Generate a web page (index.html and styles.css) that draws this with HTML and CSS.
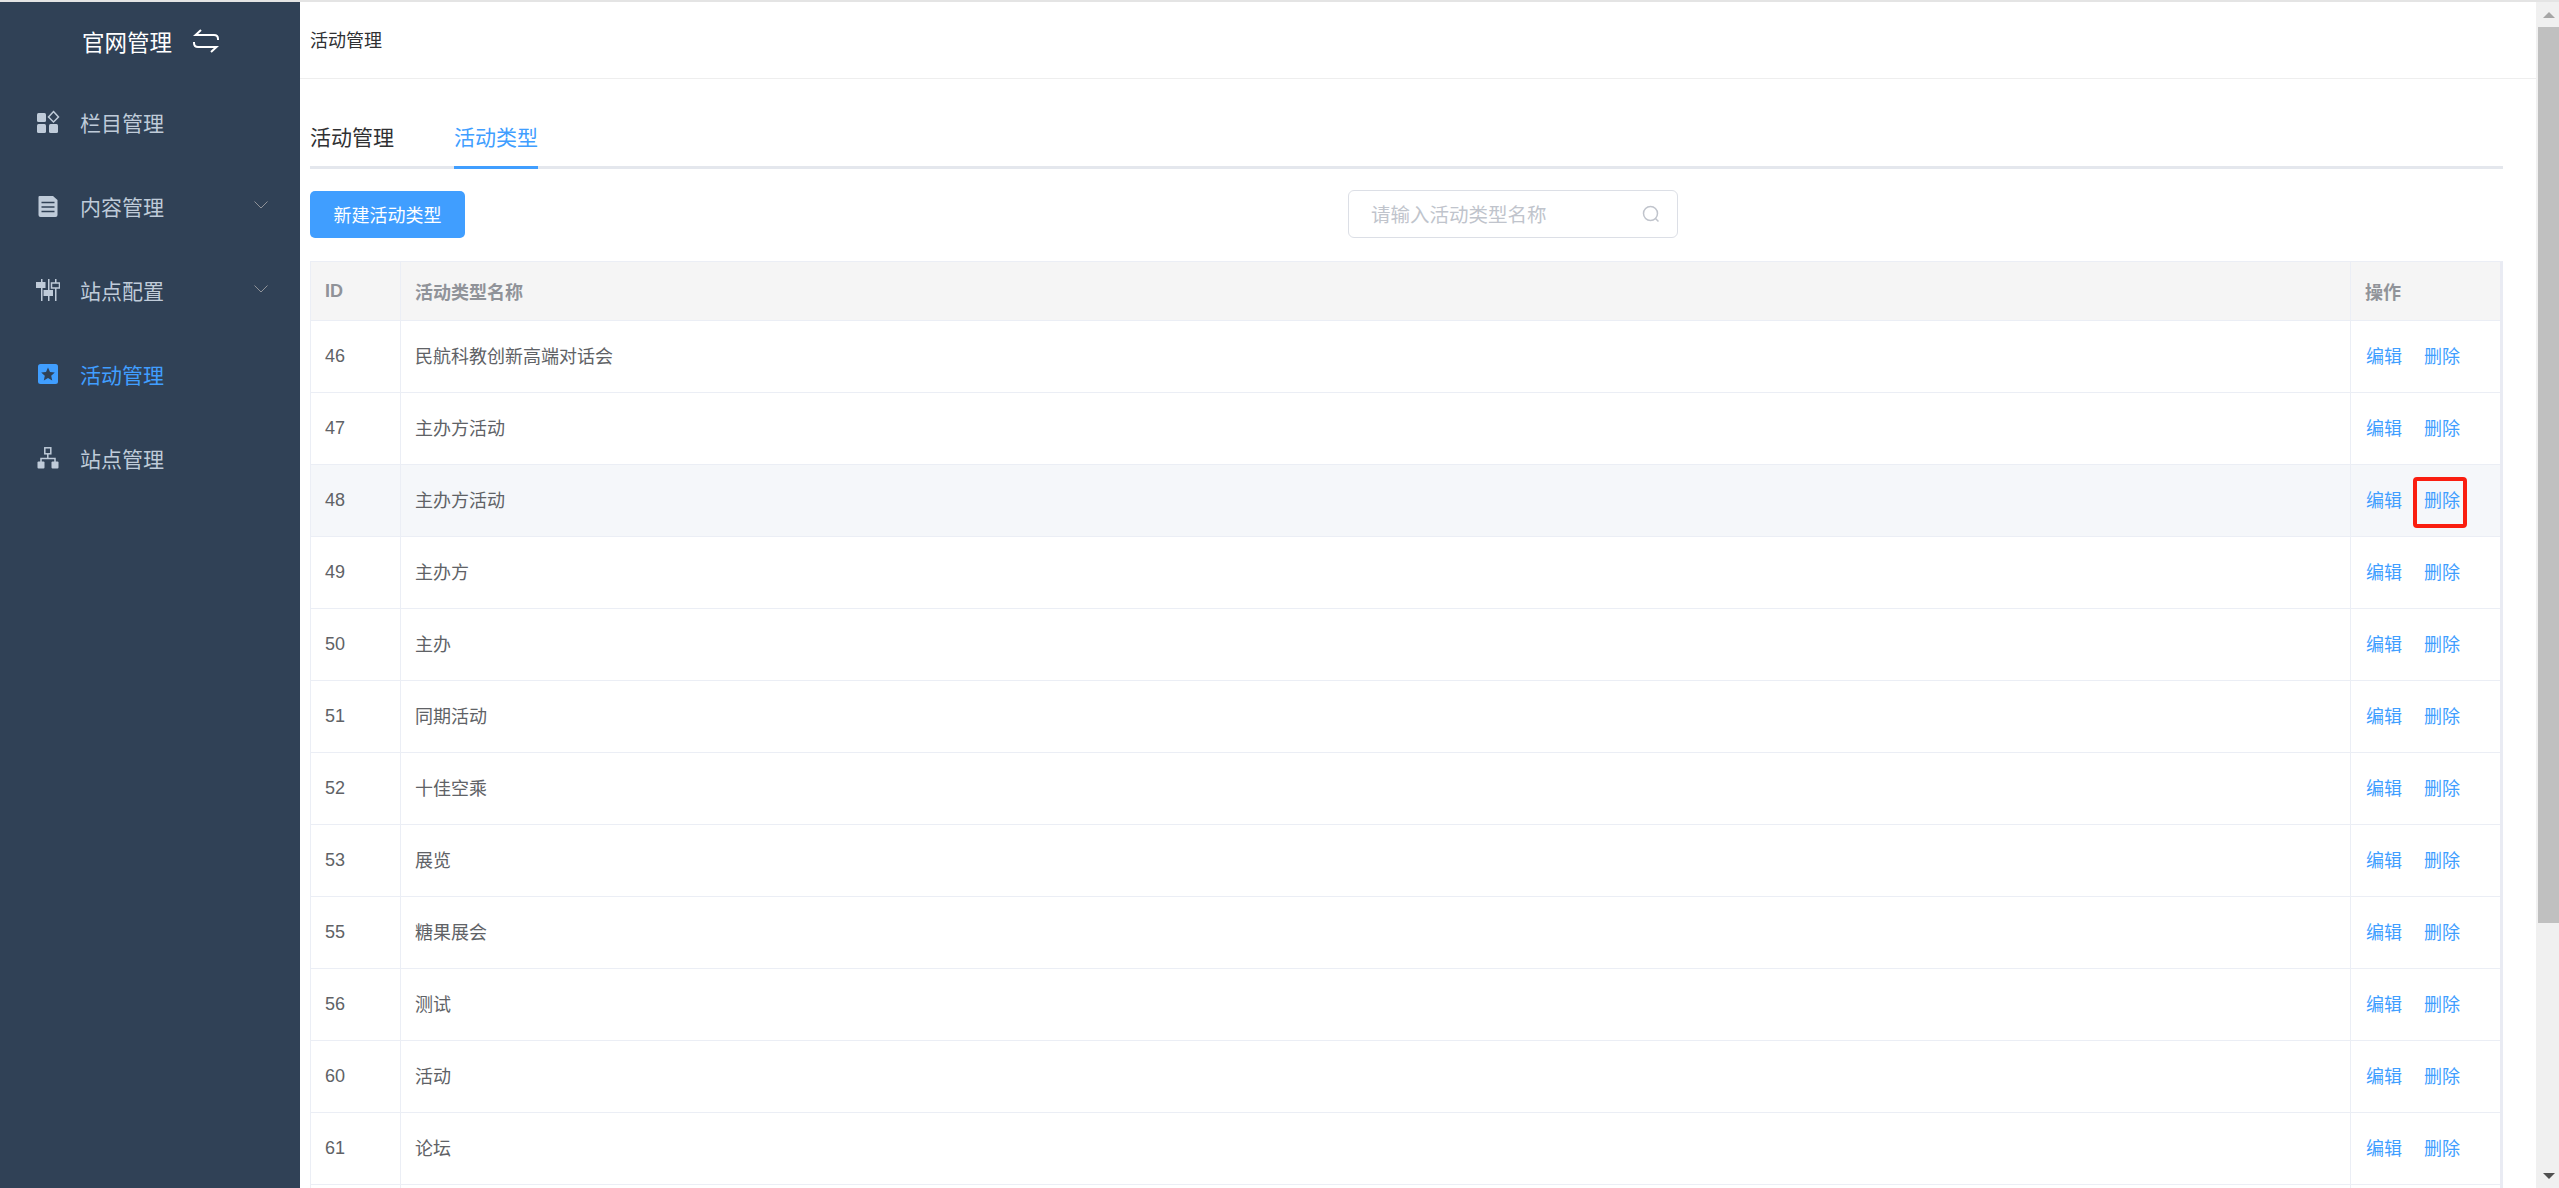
FILE: index.html
```html
<!DOCTYPE html>
<html lang="zh-CN">
<head>
    <meta charset="UTF-8">
    <title>活动类型</title>
    <link rel="stylesheet" href="styles.css">
</head>
<body>
    <div class="top-band"></div>
    <div class="app">
        <div class="sidebar">
            <div class="logo">
                <span class="logo-text">官网管理</span>
                <svg class="logo-icon" width="26" height="24" viewBox="0 0 26 24"><path d="M8 1 2.500 6 H21 Q25 6 25 10 V11 M18 23 23.500 18 H5 Q1 18 1 14 V13" fill="none" stroke="#fff" stroke-width="2"/></svg>
            </div>
            <div class="menu-item">
                <svg class="menu-icon" width="24" height="24" viewBox="0 0 24 24" fill="#bfcbd9"><rect x="1" y="3" width="9" height="9" rx="1.500"/><rect x="1" y="14" width="9" height="9" rx="1.500"/><rect x="13" y="14" width="9" height="9" rx="1.500"/><path d="M17.500 1.500 22.500 7 17.500 12 12.500 7Z" fill="none" stroke="#bfcbd9" stroke-width="1.500"/></svg>
                <span>栏目管理</span>
            </div>
            <div class="menu-item">
                <svg class="menu-icon" width="24" height="24" viewBox="0 0 24 24"><path d="M3.500 2 H17 L21.500 6 V21 Q21.500 23 19.500 23 H4.500 Q2.500 23 2.500 21 V3 Q2.500 2 3.500 2Z" fill="#bfcbd9"/><path d="M5.500 8.500 H18.500 M5.500 13 H18.500 M5.500 17.500 H18.500" stroke="#304156" stroke-width="1.500"/></svg>
                <span>内容管理</span>
                <svg class="arrow" width="14" height="8" viewBox="0 0 14 8"><path d="M.500.500 7 7 13.500.500" fill="none" stroke="#909399" stroke-width="1"/></svg>
            </div>
            <div class="menu-item">
                <svg class="menu-icon" width="24" height="24" viewBox="0 0 24 24" fill="#bfcbd9"><path d="M5 1h1.500v22H5zM12 1h1.500v22H12zM19 1h1.500v22H19z"/><rect x="0" y="4" width="9.500" height="6"/><rect x="7.500" y="12" width="9.500" height="6"/><rect x="15.500" y="5" width="8" height="5" fill="#304156" stroke="#bfcbd9" stroke-width="1.500"/></svg>
                <span>站点配置</span>
                <svg class="arrow" width="14" height="8" viewBox="0 0 14 8"><path d="M.500.500 7 7 13.500.500" fill="none" stroke="#909399" stroke-width="1"/></svg>
            </div>
            <div class="menu-item active">
                <svg class="menu-icon" width="24" height="24" viewBox="0 0 24 24"><rect x="2" y="2" width="20" height="20" rx="2.500" fill="#409eff"/><path d="M12 5.500 14 10 18.800 10.500 15.200 13.700 16.200 18.500 12 16 7.800 18.500 8.800 13.700 5.200 10.500 10 10Z" fill="#304156"/></svg>
                <span>活动管理</span>
            </div>
            <div class="menu-item">
                <svg class="menu-icon" width="24" height="24" viewBox="0 0 24 24"><rect x="8.800" y="1.800" width="6" height="6" fill="none" stroke="#bfcbd9" stroke-width="1.500"/><path d="M11.800 8V12.500M5 16V12.500H19V16" fill="none" stroke="#bfcbd9" stroke-width="1.500"/><rect x="1.500" y="15.500" width="7" height="7" rx="1" fill="#bfcbd9"/><rect x="15.500" y="15.500" width="7" height="7" rx="1" fill="#bfcbd9"/></svg>
                <span>站点管理</span>
            </div>
        </div>

        <div class="main">
            <div class="page-header">活动管理</div>
            <div class="content">
                <div class="tabs">
                    <div class="tab">活动管理</div>
                    <div class="tab active">活动类型</div>
                </div>
                <div class="toolbar">
                    <button class="btn">新建活动类型</button>
                    <div class="search">
                        <span class="placeholder">请输入活动类型名称</span>
                        <svg width="18" height="18" viewBox="0 0 18 18"><circle cx="8.500" cy="8.500" r="7" fill="none" stroke="#c0c4cc" stroke-width="1.500"/><path d="M13.500 13.500 16.500 16.500" stroke="#c0c4cc" stroke-width="1.500"/></svg>
                    </div>
                </div>
                <table class="data-table">
                    <thead>
                        <tr><th class="col-id">ID</th><th>活动类型名称</th><th class="col-op">操作</th></tr>
                    </thead>
                    <tbody>
                        <tr><td>46</td><td>民航科教创新高端对话会</td><td><a class="link">编辑</a><a class="link">删除</a></td></tr>
                        <tr><td>47</td><td>主办方活动</td><td><a class="link">编辑</a><a class="link">删除</a></td></tr>
                        <tr class="hover"><td>48</td><td>主办方活动</td><td><a class="link">编辑</a><a class="link marked">删除</a></td></tr>
                        <tr><td>49</td><td>主办方</td><td><a class="link">编辑</a><a class="link">删除</a></td></tr>
                        <tr><td>50</td><td>主办</td><td><a class="link">编辑</a><a class="link">删除</a></td></tr>
                        <tr><td>51</td><td>同期活动</td><td><a class="link">编辑</a><a class="link">删除</a></td></tr>
                        <tr><td>52</td><td>十佳空乘</td><td><a class="link">编辑</a><a class="link">删除</a></td></tr>
                        <tr><td>53</td><td>展览</td><td><a class="link">编辑</a><a class="link">删除</a></td></tr>
                        <tr><td>55</td><td>糖果展会</td><td><a class="link">编辑</a><a class="link">删除</a></td></tr>
                        <tr><td>56</td><td>测试</td><td><a class="link">编辑</a><a class="link">删除</a></td></tr>
                        <tr><td>60</td><td>活动</td><td><a class="link">编辑</a><a class="link">删除</a></td></tr>
                        <tr><td>61</td><td>论坛</td><td><a class="link">编辑</a><a class="link">删除</a></td></tr>
                        <tr><td></td><td></td><td></td></tr>
                    </tbody>
                </table>
            </div>
        </div>

        <div class="scrollbar">
            <div class="scroll-up"></div>
            <div class="scroll-thumb"></div>
            <div class="scroll-down"></div>
        </div>
    </div>
</body>
</html>
```

FILE: styles.css
```css
html, body {
    height: 100%;
    margin: 0;
    overflow: hidden;
}
body {
    font-family: "Liberation Sans", "Noto Sans CJK SC", sans-serif;
    background-color: white;
    color: #606266;
}
.top-band {
    height: 2px;
    background-color: #e4e4e4;
}
.app {
    display: flex;
    height: 1186px;
    overflow: hidden;
}
.sidebar {
    width: 300px;
    flex-shrink: 0;
    background-color: #304156;
    color: #bfcbd9;
}
.logo {
    height: 78px;
    display: flex;
    align-items: center;
    padding-left: 82px;
    color: white;
    font-size: 22.500px;
}
.logo-icon {
    margin-left: 21px;
}
.menu-item {
    height: 84px;
    display: flex;
    align-items: center;
    padding-left: 36px;
    font-size: 21px;
}
.menu-item span {
    margin-left: 20px;
}
.menu-item.active {
    color: #409eff;
}
.arrow {
    margin-left: 90px;
    margin-top: -3px;
}
.main {
    flex: 1;
    min-width: 0;
    height: 1186px;
    overflow: hidden;
}
.page-header {
    height: 76px;
    line-height: 78px;
    padding-left: 10px;
    font-size: 18px;
    color: #303133;
    border-bottom: 1px solid #eeeeee;
}
.content {
    padding: 0 33px 0 10px;
}
.tabs {
    display: flex;
    gap: 60px;
    border-bottom: 3px solid #e4e7ed;
    box-sizing: border-box;
    margin-top: 13px;
    height: 77px;
    align-items: flex-end;
}
.tab {
    font-size: 21px;
    color: #303133;
    height: 56px;
    padding-top: 3px;
    line-height: 56px;
    margin-bottom: -3px;
    border-bottom: 3px solid transparent;
}
.tab.active {
    color: #409eff;
    border-bottom-color: #409eff;
}
.toolbar {
    display: flex;
    align-items: center;
    margin-top: 21px;
    height: 48px;
}
.btn {
    width: 155px;
    height: 47px;
    padding: 0 0 1px;
    border: none;
    border-radius: 5px;
    color: white;
    background-color: #409eff;
    font-family: inherit;
    font-size: 18px;
}
.search {
    width: 330px;
    height: 48px;
    box-sizing: border-box;
    margin-left: 883px;
    padding: 0 17px 0 22px;
    display: flex;
    align-items: center;
    justify-content: space-between;
    border: 1px solid #dcdfe6;
    border-radius: 6px;
}
.placeholder {
    font-size: 19.500px;
    color: #c0c4cc;
    padding-bottom: 1px;
}
.data-table {
    width: 100%;
    margin-top: 23px;
    table-layout: fixed;
    border-collapse: separate;
    border-spacing: 0;
    border-top: 1px solid #ebeef5;
    border-left: 1px solid #ebeef5;
    border-right: 3px solid #e9ebf3;
    font-size: 18px;
}
.data-table th, .data-table td {
    padding: 0 14px;
    text-align: left;
    border-bottom: 1px solid #ebeef5;
    border-right: 1px solid #ebeef5;
    box-sizing: border-box;
}
.data-table th {
    height: 59px;
    background-color: #f5f5f5;
    color: #909399;
    font-weight: bold;
}
.data-table td {
    height: 72px;
}
.data-table td:not(:first-child) {
    padding-bottom: 3px;
}
.data-table td:last-child, .data-table th:last-child {
    border-right: none;
}
.col-id {
    width: 90px;
}
.col-op {
    width: 149px;
}
.hover td {
    background-color: #f5f7fa;
}
.link {
    color: #409eff;
    margin-left: 1px;
    margin-right: 21px;
    position: relative;
}
.marked::after {
    content: "";
    position: absolute;
    left: -11px;
    right: -7px;
    top: -14px;
    bottom: -17px;
    border: 4px solid #fa1e10;
    border-radius: 4px;
}
.scrollbar {
    width: 23px;
    flex-shrink: 0;
    background-color: #f0f0f0;
    display: flex;
    flex-direction: column;
    align-items: flex-end;
}
.scroll-up, .scroll-down {
    width: 21px;
    height: 25px;
    display: flex;
    justify-content: center;
    align-items: center;
}
.scroll-up::before {
    content: "";
    border-left: 6px solid transparent;
    border-right: 6px solid transparent;
    border-bottom: 6px solid #a6a6a6;
}
.scroll-thumb {
    width: 21px;
    height: 896px;
    background-color: #c0c0c0;
}
.scroll-down {
    margin-top: auto;
}
.scroll-down::before {
    content: "";
    border-left: 6px solid transparent;
    border-right: 6px solid transparent;
    border-top: 6px solid #505050;
}
```
